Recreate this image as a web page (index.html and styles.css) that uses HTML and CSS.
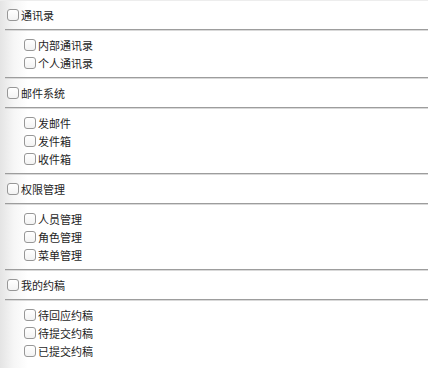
FILE: index.html
```html
<!DOCTYPE html>
<html lang="zh">
<head>
<meta charset="utf-8">
<title>权限</title>
<link rel="stylesheet" href="styles.css">
</head>
<body>
<div class="tree">
  <section class="group">
    <label class="head"><input type="checkbox" class="cb">通讯录</label>
    <hr class="rule">
    <ul class="items">
      <li><label><input type="checkbox" class="cb">内部通讯录</label></li>
      <li><label><input type="checkbox" class="cb">个人通讯录</label></li>
    </ul>
    <hr class="rule">
  </section>
  <section class="group">
    <label class="head"><input type="checkbox" class="cb">邮件系统</label>
    <hr class="rule">
    <ul class="items">
      <li><label><input type="checkbox" class="cb">发邮件</label></li>
      <li><label><input type="checkbox" class="cb">发件箱</label></li>
      <li><label><input type="checkbox" class="cb">收件箱</label></li>
    </ul>
    <hr class="rule">
  </section>
  <section class="group">
    <label class="head"><input type="checkbox" class="cb">权限管理</label>
    <hr class="rule">
    <ul class="items">
      <li><label><input type="checkbox" class="cb">人员管理</label></li>
      <li><label><input type="checkbox" class="cb">角色管理</label></li>
      <li><label><input type="checkbox" class="cb">菜单管理</label></li>
    </ul>
    <hr class="rule">
  </section>
  <section class="group">
    <label class="head"><input type="checkbox" class="cb">我的约稿</label>
    <hr class="rule">
    <ul class="items">
      <li><label><input type="checkbox" class="cb">待回应约稿</label></li>
      <li><label><input type="checkbox" class="cb">待提交约稿</label></li>
      <li><label><input type="checkbox" class="cb">已提交约稿</label></li>
    </ul>
  </section>
</div>
</body>
</html>
```
FILE: styles.css
```css
html, body {
  margin: 0;
  padding: 0;
}
body {
  width: 428px;
  height: 368px;
  overflow: hidden;
  border-top: 1px solid #ededed;
  box-sizing: border-box;
  background: linear-gradient(to right, #e4e4e4 0px, #f6f6f6 14px, #ffffff 28px);
  font-family: "Noto Sans CJK SC", "Liberation Serif", serif;
  font-size: 11px;
  color: #1e1e1e;
}
.tree {
  display: flex;
  flex-direction: column;
}
.group {
  display: flex;
  flex-direction: column;
}
.head {
  display: flex;
  align-items: center;
  height: 28px;
  padding-left: 7px;
}
.rule {
  margin: 0 0 0 5px;
  height: 0;
  border: 0;
  border-top: 1px solid #9d9d9d;
  border-bottom: 1px solid #d9d9d9;
}
.items {
  list-style: none;
  margin: 0;
  padding: 5px 0 5px 24px;
}
.items li {
  height: 18px;
  display: flex;
  align-items: center;
}
.items label {
  display: flex;
  align-items: center;
}
.cb {
  -webkit-appearance: none;
  appearance: none;
  width: 12px;
  height: 12px;
  margin: 0 2px 0 0;
  box-sizing: border-box;
  border: 1px solid #979797;
  border-radius: 3px;
  background: linear-gradient(#ffffff, #f3f3f3);
  flex: none;
}
```
